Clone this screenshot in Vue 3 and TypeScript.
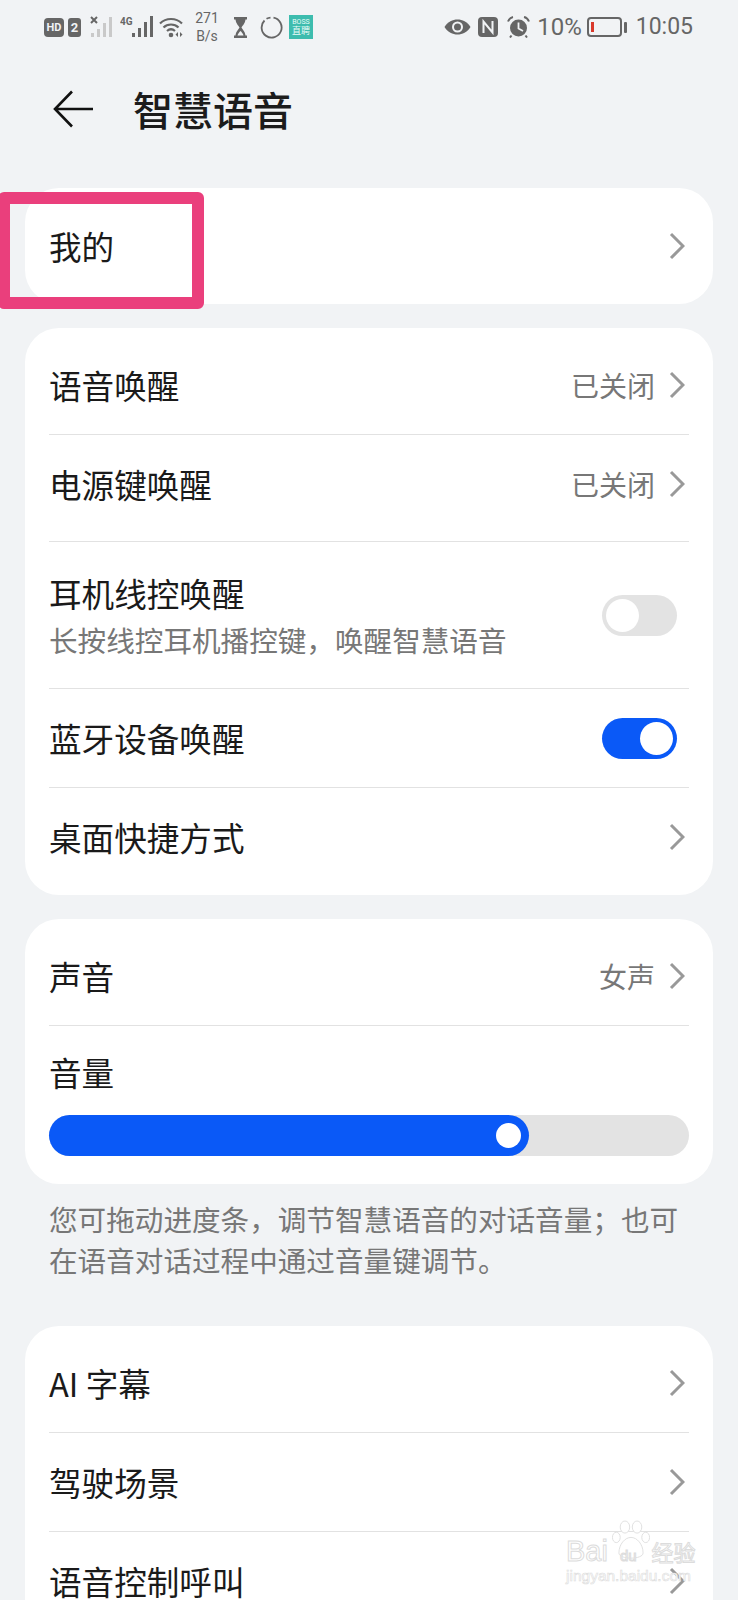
<script setup lang="ts">
interface Row {
  label: string;
  sub?: string;
  value?: string;
  toggle?: boolean;
  chevron?: boolean;
  size?: 'short' | 'double' | 'lift';
}

const wakeRows: Row[] = [
  { label: '语音唤醒', value: '已关闭', chevron: true },
  { label: '电源键唤醒', value: '已关闭', chevron: true, size: 'lift' },
  { label: '耳机线控唤醒', sub: '长按线控耳机播控键，唤醒智慧语音', toggle: false, size: 'double' },
  { label: '蓝牙设备唤醒', toggle: true, size: 'short' },
  { label: '桌面快捷方式', chevron: true },
];

const moreRows: Row[] = [
  { label: 'AI 字幕', chevron: true },
  { label: '驾驶场景', chevron: true, size: 'short' },
  { label: '语音控制呼叫', chevron: true },
];

const volume = 75;
</script>

<template>
  <div class="page">
    <div class="status-bar">
      <div class="status-left">
        <span class="hd">HD</span>
        <span class="sim">2</span>
        <svg class="sig" width="24" height="22" viewBox="0 0 24 22">
          <path d="M1 1l6 6M7 1L1 7" stroke="#666" stroke-width="2" />
          <g fill="#c9c9c9">
            <rect x="1" y="17" width="3" height="4" />
            <rect x="7" y="13" width="3" height="8" />
            <rect x="13" y="7" width="3" height="14" />
            <rect x="19" y="1" width="3" height="20" />
          </g>
        </svg>
        <svg class="sig-4g" width="34" height="22" viewBox="0 0 34 22">
          <text x="0" y="9" font-size="10" font-weight="700" fill="#666" font-family="Roboto, sans-serif">4G</text>
          <g fill="#666">
            <rect x="12" y="17" width="3" height="4" />
            <rect x="18" y="12" width="3" height="9" />
            <rect x="24" y="6" width="3" height="15" />
            <rect x="30" y="0" width="3" height="21" />
          </g>
        </svg>
        <svg class="wifi" width="25" height="22" viewBox="0 0 25 22">
          <path d="M1 7.500C7 1.500 17 1.500 23 7.500M4.500 11.500C8.500 7.500 15.500 7.500 19.500 11.500M8 15C10.500 12.800 13.500 12.800 16 15" fill="none" stroke="#666" stroke-width="2.200" />
          <circle cx="12" cy="19" r="2.300" fill="#666" />
          <path d="M19 16v5l-2.500-2.500zM21 16v5l2.500-2.500z" fill="#666" />
        </svg>
        <div class="speed"><span>271</span><span>B/s</span></div>
        <svg class="glass" width="13" height="21" viewBox="0 0 13 21">
          <path d="M0 0h13v2.500h-1.500C11 7 8 9 7.500 10.500 8 12 11 14 11.500 18.500H13V21H0v-2.500h1.500C2 14 5 12 5.500 10.500 5 9 2 7 1.500 2.500H0z" fill="#666" />
          <path d="M3.500 18.500c.5-2 2-3.500 3-4.500 1 1 2.500 2.500 3 4.500z" fill="#f1f3f5" />
        </svg>
        <svg class="ring" width="23" height="23" viewBox="0 0 23 23">
          <path d="M13.500 1.700A10 10 0 1 1 4.500 4.500" fill="none" stroke="#666" stroke-width="1.800" />
          <path d="M6.500 2.800A10 10 0 0 1 10.500 1.600" fill="none" stroke="#666" stroke-width="1.800" />
        </svg>
        <div class="boss"><span>BOSS</span><span>直聘</span></div>
      </div>
      <div class="status-right">
        <svg width="27" height="16" viewBox="0 0 27 16">
          <path d="M0.500 8C4 2.500 8.500 0.500 13.500 0.500S23 2.500 26.500 8C23 13.500 18.500 15.500 13.500 15.500S4 13.500 0.500 8z" fill="#666" />
          <circle cx="13.500" cy="8" r="5.500" fill="#f1f3f5" />
          <circle cx="13.500" cy="8" r="3.500" fill="#666" />
        </svg>
        <svg class="nfc" width="20" height="20" viewBox="0 0 20 20">
          <rect width="20" height="20" rx="4" fill="#666" />
          <path d="M5.500 16V4.500L14.500 15.500V4" fill="none" stroke="#f1f3f5" stroke-width="2" />
        </svg>
        <svg class="alarm" width="23" height="22" viewBox="0 0 23 22">
          <circle cx="11.500" cy="12" r="8.500" fill="#666" />
          <path d="M11.500 6.500V12.500L16 15" fill="none" stroke="#f1f3f5" stroke-width="1.800" />
          <path d="M1 5.500C2 3 3.500 1.500 6 1M22 5.500C21 3 19.500 1.500 17 1M4.500 19.500L3 21.500M18.500 19.500L20 21.500" fill="none" stroke="#666" stroke-width="2" />
        </svg>
        <span class="stat-text pct">10%</span>
        <div class="battery"><i class="battery-level"></i></div>
        <i class="battery-nub"></i>
        <span class="stat-text clock">10:05</span>
      </div>
    </div>

    <header class="title-bar">
      <svg width="40" height="38" viewBox="0 0 40 38">
        <path d="M19 1.500L2 19L19 36.500M2 19H40" fill="none" stroke="#111" stroke-width="2.600" />
      </svg>
      <h1>智慧语音</h1>
    </header>

    <section class="card mine">
      <div class="row">
        <span class="label">我的</span>
        <svg class="chevron" width="16" height="28" viewBox="0 0 16 28">
          <path d="M2 2L14 14L2 26" fill="none" stroke="#999" stroke-width="3" />
        </svg>
      </div>
    </section>

    <section class="card">
      <div v-for="row in wakeRows" :key="row.label" class="row" :class="row.size">
        <div class="text">
          <span class="label">{{ row.label }}</span>
          <span v-if="row.sub" class="sub">{{ row.sub }}</span>
        </div>
        <div class="side">
          <span v-if="row.value" class="value">{{ row.value }}</span>
          <svg v-if="row.chevron" class="chevron" width="16" height="28" viewBox="0 0 16 28">
            <path d="M2 2L14 14L2 26" fill="none" stroke="#999" stroke-width="3" />
          </svg>
          <span v-if="row.toggle !== undefined" class="switch" :class="{ on: row.toggle }"><i></i></span>
        </div>
      </div>
    </section>

    <section class="card">
      <div class="row">
        <span class="label">声音</span>
        <div class="side">
          <span class="value">女声</span>
          <svg class="chevron" width="16" height="28" viewBox="0 0 16 28">
            <path d="M2 2L14 14L2 26" fill="none" stroke="#999" stroke-width="3" />
          </svg>
        </div>
      </div>
      <div class="volume">
        <span class="label">音量</span>
        <div class="track">
          <div class="fill" :style="{ width: volume + '%' }"><i></i></div>
        </div>
      </div>
    </section>

    <p class="hint">您可拖动进度条，调节智慧语音的对话音量；也可在语音对话过程中通过音量键调节。</p>

    <section class="card">
      <div v-for="row in moreRows" :key="row.label" class="row" :class="row.size">
        <span class="label">{{ row.label }}</span>
        <svg class="chevron" width="16" height="28" viewBox="0 0 16 28">
          <path d="M2 2L14 14L2 26" fill="none" stroke="#999" stroke-width="3" />
        </svg>
      </div>
    </section>

    <!-- red marker drawn over the screenshot -->
    <div class="marker"></div>

    <div class="watermark">
      <svg class="paw" width="38" height="40" viewBox="0 0 44 46">
        <g fill="#fff" stroke="#dcdcdc" stroke-width="1">
          <ellipse cx="15" cy="8" rx="5.500" ry="7" />
          <ellipse cx="29" cy="8" rx="5.500" ry="7" />
          <ellipse cx="5" cy="20" rx="4.500" ry="6" />
          <ellipse cx="39" cy="20" rx="4.500" ry="6" />
          <path d="M8 38C8 28 15 20 22 20S36 28 36 38C36 46 8 46 8 38z" />
        </g>
      </svg>
      <div class="brand"><span>Bai</span><span class="du">du</span><span class="cn">经验</span></div>
      <div class="site">jingyan.baidu.com</div>
    </div>
  </div>
</template>

<style scoped>
.page {
  position: relative;
  width: 738px;
  height: 1600px;
  overflow: hidden;
  background: #f1f3f5;
  font-family: "Noto Sans CJK SC", "Noto Sans", sans-serif;
  color: #1a1a1a;
}

.status-bar {
  height: 52px;
  padding: 2px 45px 0 44px;
  box-sizing: border-box;
  display: flex;
  align-items: center;
  justify-content: space-between;
  color: #666;
}

.status-left,
.status-right {
  display: flex;
  align-items: center;
}

.hd {
  width: 20px;
  height: 19px;
  border-radius: 4px;
  background: #666;
  color: #f1f3f5;
  font: 700 11px/19px Roboto, sans-serif;
  text-align: center;
}

.sim {
  width: 13px;
  height: 19px;
  margin-left: 4px;
  border-radius: 3px;
  background: #666;
  color: #f1f3f5;
  font: 700 13px/19px Roboto, sans-serif;
  text-align: center;
}

.sig {
  margin-left: 9px;
}

.sig-4g {
  margin-left: 6px;
}

.wifi {
  margin-left: 5px;
}

.speed {
  margin-left: 10px;
  width: 26px;
  display: flex;
  flex-direction: column;
  align-items: center;
  font: 400 14px/18px Roboto, sans-serif;
}

.glass {
  margin-left: 14px;
}

.ring {
  margin-left: 13px;
}

.boss {
  width: 24px;
  height: 24px;
  margin-left: 6px;
  background: #3dbcae;
  color: #e9fbf8;
  display: flex;
  flex-direction: column;
  align-items: center;
  justify-content: center;
  font: 400 7px/9px Roboto, "Noto Sans CJK SC", sans-serif;
}

.boss span:last-child {
  font-size: 9px;
}

.nfc {
  margin-left: 7px;
}

.alarm {
  margin-left: 9px;
}

.stat-text {
  font: 400 24px/28px Roboto, sans-serif;
  color: #666;
}

.pct {
  margin-left: 7px;
}

.battery {
  width: 35px;
  height: 20px;
  margin-left: 5px;
  box-sizing: border-box;
  border: 2px solid #666;
  border-radius: 4px;
  padding: 3px 2px;
  display: flex;
}

.battery-level {
  width: 3px;
  background: #d9392b;
}

.battery-nub {
  width: 3px;
  height: 11px;
  margin-left: 2px;
  background: #666;
  border-radius: 1px;
}

.clock {
  margin-left: 9px;
  font-size: 23px;
}

.title-bar {
  height: 136px;
  padding: 0 0 22px 53px;
  box-sizing: border-box;
  display: flex;
  align-items: center;
  gap: 40px;
}

h1 {
  margin: 0;
  font-size: 40px;
  line-height: 56px;
  font-weight: 500;
  color: #1c1c1c;
}

.card {
  margin: 0 25px 24px;
  background: #fff;
  border-radius: 34px;
}

.row {
  height: 107px;
  margin: 0 24px;
  box-sizing: border-box;
  border-bottom: 1px solid #e2e2e2;
  display: flex;
  align-items: center;
  justify-content: space-between;
}

.row:first-child {
  padding-top: 8px;
}

.row:last-child {
  padding-bottom: 9px;
  border-bottom: none;
}

.mine .row {
  height: 116px;
  padding: 0;
}

.row.lift {
  padding-bottom: 8px;
}

.row.short {
  height: 99px;
}

.row.double {
  height: 147px;
}

.text {
  display: flex;
  flex-direction: column;
}

.label {
  font-size: 32.6px;
  line-height: 44px;
}

.sub {
  margin-top: 5px;
  font-size: 28.6px;
  line-height: 40px;
  color: #777;
}

.side {
  display: flex;
  align-items: center;
}

.value {
  font-size: 28px;
  color: #777;
  margin-right: 14px;
}

.chevron {
  margin-right: 4px;
}

.switch {
  width: 75px;
  height: 41px;
  margin-right: 12px;
  padding: 4px;
  box-sizing: border-box;
  border-radius: 21px;
  background: #e3e3e3;
  display: flex;
}

.switch i {
  width: 33px;
  height: 33px;
  border-radius: 50%;
  background: #fff;
}

.switch.on {
  background: #0a59f7;
  justify-content: flex-end;
}

.volume {
  height: 158px;
  padding: 24px 24px 0;
  box-sizing: border-box;
}

.track {
  height: 41px;
  margin-top: 21px;
  border-radius: 21px;
  background: #e3e3e3;
}

.fill {
  height: 41px;
  padding-right: 8px;
  box-sizing: border-box;
  border-radius: 21px;
  background: #0a59f7;
  display: flex;
  align-items: center;
  justify-content: flex-end;
}

.fill i {
  width: 25px;
  height: 25px;
  border-radius: 50%;
  background: #fff;
}

.hint {
  margin: -10px 49px 46px;
  font-size: 28.6px;
  line-height: 41px;
  color: #777;
}

.marker {
  position: absolute;
  left: -2px;
  top: 192px;
  width: 206px;
  height: 117px;
  box-sizing: border-box;
  border: 12px solid #ea3f7c;
  border-radius: 6px;
}

.watermark {
  position: absolute;
  left: 566px;
  top: 1520px;
  width: 140px;
  height: 80px;
}

.paw {
  position: absolute;
  left: 46px;
  top: 0;
}

.brand {
  position: absolute;
  left: 0;
  top: 16px;
  width: 140px;
  display: flex;
  align-items: baseline;
  font: 400 29px/30px "Liberation Sans", sans-serif;
  color: #fff;
  -webkit-text-stroke: 1px #dcdcdc;
}

.du {
  margin-left: 12px;
  font-size: 15px;
}

.cn {
  margin-left: 15px;
  font: 400 22px/30px "Noto Sans CJK SC", sans-serif;
}

.site {
  position: absolute;
  left: 0;
  top: 47px;
  font: 400 15.500px/18px "Liberation Sans", sans-serif;
  color: #fff;
  -webkit-text-stroke: 0.6px #dcdcdc;
  white-space: nowrap;
}
</style>

<style>
html,
body {
  margin: 0;
  background: #f1f3f5;
}
</style>
